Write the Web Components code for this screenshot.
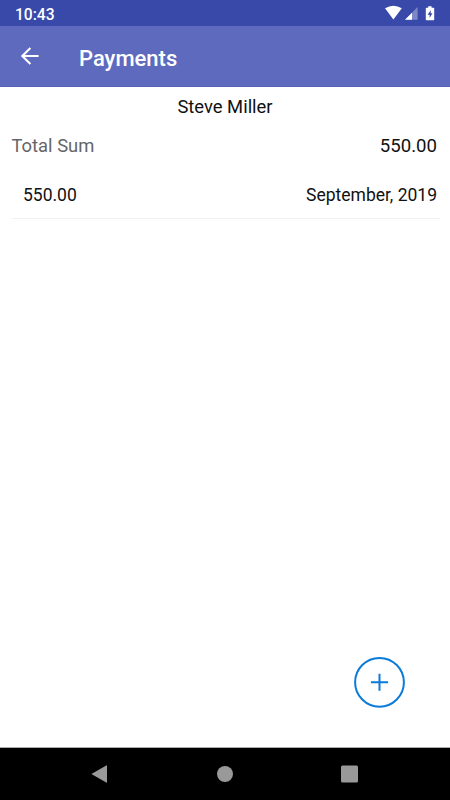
<!DOCTYPE html>
<html lang="en">
<head>
<meta charset="utf-8">
<title>Payments</title>
<style>
html, body { margin: 0; height: 100%; }
body { font-family: Roboto, "Noto Sans", sans-serif; background: #fff; color: #111; overflow: hidden; }
</style>
</head>
<body>
<payments-screen></payments-screen>
<script>
function define(name, markup) {
  const template = document.createElement('template');
  template.innerHTML = markup;
  customElements.define(name, class extends HTMLElement {
    constructor() {
      super();
      this.attachShadow({ mode: 'open' }).append(template.content.cloneNode(true));
    }
  });
}

define('status-bar', `
<style>
:host { display: flex; align-items: center; justify-content: space-between; box-sizing: border-box; height: 26px; padding: 2px 15px 0 15px; background: #3849aa; color: #fff; font-size: 15.6px; font-weight: 460; line-height: 24px; }
span { padding-top: 1px; }
svg { display: block; margin-right: -1px; }
</style>
<span><slot></slot></span>
<svg width="52" height="18" viewBox="384 4.5 52 18" fill="#fff">
  <path d="M385 7.8Q393.4 2.6 401.8 7.8L393.4 18.9Z"/>
  <path d="M417.6 6.6V19.2H405Z" opacity=".35"/>
  <path d="M412 12.2V19.2H405Z"/>
  <path fill-rule="evenodd" d="M428.2 5.8H431.6V7.2H433.6Q434.2 7.2 434.2 7.8V19Q434.2 19.8 433.4 19.8H426.6Q425.8 19.8 425.8 19V7.8Q425.8 7.2 426.4 7.2H428.2ZM430.7 9.7L427.6 14.2H429.6V17.4L432.5 12.7H430.7Z"/>
</svg>`);

define('app-bar', `
<style>
:host { display: flex; align-items: center; box-sizing: border-box; height: 61px; padding: 3px 20px 0; background: #5d6abe; border-bottom: 1px solid #5663bc; color: #fff; font-size: 22px; font-weight: 500; }
svg { display: block; margin: 0 39px 3px 0; }
span { padding-top: 1px; }
</style>
<svg width="20" height="20" viewBox="20 47 20 20" fill="none" stroke="#fff" stroke-width="2.1"><path d="M38.6 57H22.6M30.4 48.9L22.3 57L30.4 65.1"/></svg>
<span><slot></slot></span>`);

define('customer-name', `
<style>:host { display: block; height: 40px; line-height: 40px; text-align: center; font-size: 18.4px; font-weight: 370; }</style>
<slot></slot>`);

define('total-row', `
<style>
:host { display: flex; justify-content: space-between; height: 38px; line-height: 38px; padding: 0 13px 0 11.5px; font-size: 18.6px; font-weight: 370; }
.label { color: #666; font-size: 18.4px; }
</style>
<span class="label"><slot name="label"></slot></span><span><slot name="value"></slot></span>`);

define('payment-row', `
<style>
:host { display: flex; justify-content: space-between; box-sizing: border-box; height: 48px; line-height: 49px; margin: 0 10px 0 12px; padding: 0 3px 0 11px; font-size: 17.5px; font-weight: 380; border-bottom: 1px solid #f1f1f1; }
</style>
<span><slot name="amount"></slot></span><span><slot name="month"></slot></span>`);

define('add-button', `
<style>:host { display: block; } svg { display: block; }</style>
<svg width="52" height="52" viewBox="0.5 -0.3 52 52" fill="none" stroke="#0a7bd8" stroke-width="2"><circle cx="26" cy="26" r="24.4"/><path d="M26 17.4V34.4M17.4 25.9H34.6"/></svg>`);

define('nav-bar', `
<style>
:host { display: flex; align-items: center; justify-content: space-between; box-sizing: border-box; height: 53px; padding: 0 92px 1px 91px; background: #000; border-top: 1px solid #aaa; }
svg { display: block; }
</style>
<svg width="17" height="18" fill="#999"><path d="M.4 9L15.7 .3Q16 .2 16 .6V17.4Q16 17.8 15.7 17.7Z"/></svg>
<svg width="18" height="18" fill="#999"><circle cx="9" cy="9" r="8"/></svg>
<svg width="17" height="18" fill="#999"><rect x="0" y=".5" width="17" height="17" rx="1.5"/></svg>`);

define('payments-screen', `
<style>
:host { display: flex; flex-direction: column; width: 450px; height: 800px; }
main { flex: 1; display: flex; flex-direction: column; }
payment-row { margin-top: 6px; }
add-button { margin: auto 44px 39px auto; }
</style>
<status-bar>10:43</status-bar>
<app-bar>Payments</app-bar>
<main>
  <customer-name>Steve Miller</customer-name>
  <total-row><span slot="label">Total Sum</span><span slot="value">550.00</span></total-row>
  <payment-row><span slot="amount">550.00</span><span slot="month">September, 2019</span></payment-row>
  <add-button role="button" aria-label="Add payment"></add-button>
</main>
<nav-bar></nav-bar>`);
</script>
</body>
</html>
